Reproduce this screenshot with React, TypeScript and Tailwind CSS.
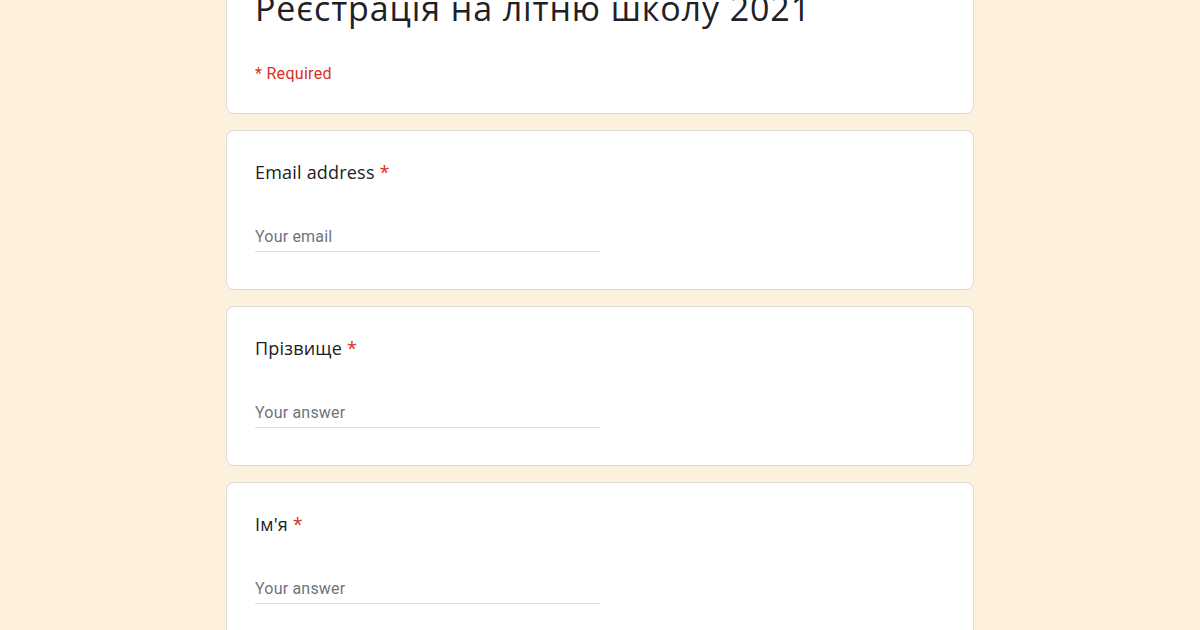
const questions = [
  { label: "Email address", placeholder: "Your email" },
  { label: "Прізвище", placeholder: "Your answer" },
  { label: "Ім'я", placeholder: "Your answer" },
];

function QuestionCard({ label, placeholder }: { label: string; placeholder: string }) {
  return (
    <section className="h-[160px] rounded-lg border border-[#dadce0] bg-white px-7 pt-[29px]">
      <p className="text-[18px] leading-6 tracking-[0.2px] text-[#202124] [font-family:'Open_Sans',sans-serif]">
        {label} <span className="text-[#d93025]">*</span>
      </p>
      <div className="mt-[43px] w-[345px] border-b border-[#e0e0e0] pb-1">
        <input
          type="text"
          placeholder={placeholder}
          className="block h-5 w-full text-[16px] tracking-[0.2px] text-[#202124] outline-none placeholder:text-[#70757a] [font-family:Roboto,sans-serif]"
        />
      </div>
    </section>
  );
}

export default function App() {
  return (
    <main className="h-[630px] overflow-hidden bg-[#fdf0dc]">
      <div className="mx-auto flex w-[748px] flex-col gap-4">
        <section className="-mt-[37px] rounded-lg border border-[#dadce0] bg-white px-7 pt-6 pb-[29px]">
          <h1 className="text-[34px] leading-10 tracking-[0.9px] text-[#202124] [font-family:'Open_Sans',sans-serif]">
            Реєстрація на літню школу 2021
          </h1>
          <p className="mt-9 text-[16px] leading-5 tracking-[0.3px] text-[#d93025] [font-family:Roboto,sans-serif]">
            * Required
          </p>
        </section>

        {questions.map((q) => (
          <QuestionCard key={q.label} label={q.label} placeholder={q.placeholder} />
        ))}
      </div>
    </main>
  );
}
